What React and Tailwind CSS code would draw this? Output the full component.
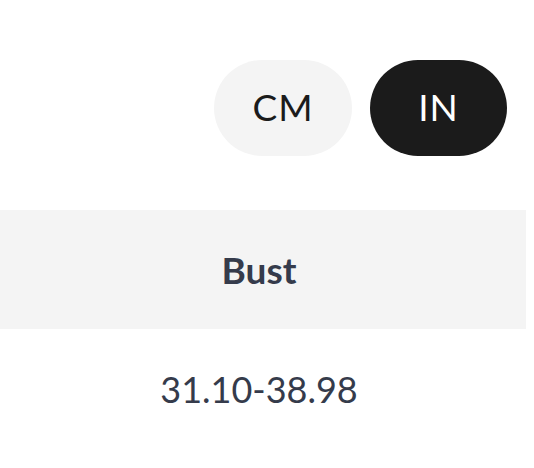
import { useState } from "react";

function UnitToggle() {
    const [unit, setUnit] = useState("IN");

    return (
        <div className="flex justify-end gap-[18px] pr-[27px] pt-[60px]">
            {["CM", "IN"].map((u) => (
                <button
                    key={u}
                    onClick={() => setUnit(u)}
                    className={
                        unit === u
                            ? "w-[137px] h-[96px] pb-[2px] rounded-full bg-[#1b1b1b] text-white text-[37px] font-normal tracking-[1px]"
                            : "w-[138px] h-[96px] pb-[2px] rounded-full bg-[#f4f4f4] text-[#1b1b1b] text-[37px] font-normal tracking-[1px]"
                    }
                >
                    {u}
                </button>
            ))}
        </div>
    );
}

function App() {
    return (
        <div className="w-[534px] h-[468px] bg-white font-['Lato',sans-serif]">
            <UnitToggle />
            <table className="mt-[54px] w-[526px] text-center text-[#353b4b]">
                <thead>
                    <tr className="bg-[#f4f4f4]">
                        <th className="h-[119px] pr-[8px] text-[37px] font-bold">Bust</th>
                    </tr>
                </thead>
                <tbody>
                    <tr>
                        <td className="h-[120px] pr-[8px] text-[36px]">31.10-38.98</td>
                    </tr>
                </tbody>
            </table>
        </div>
    );
}

export default App;
